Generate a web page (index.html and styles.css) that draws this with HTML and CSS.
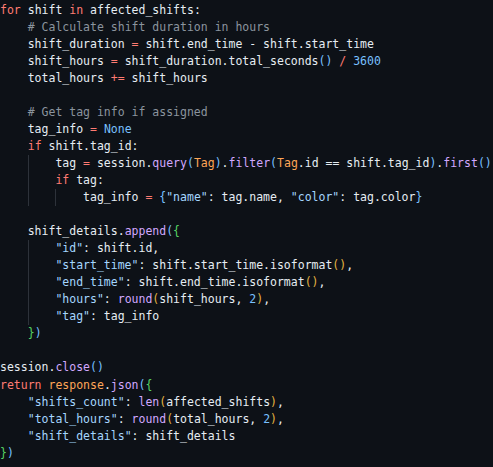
FILE: index.html
```html
<!DOCTYPE html>
<html>
<head>
<meta charset="utf-8">
<link rel="stylesheet" href="styles.css">
</head>
<body>
<div class="editor">
<div class="ln"><span class="k">for</span> shift <span class="k">in</span> affected_shifts:</div>
<div class="ln">    <span class="c"># Calculate shift duration in hours</span></div>
<div class="ln">    shift_duration <span class="o">=</span> shift.end_time - shift.start_time</div>
<div class="ln">    shift_hours <span class="o">=</span> shift_duration.total_seconds<span class="b1">()</span> <span class="o">/</span> <span class="n">3600</span></div>
<div class="ln">    total_hours <span class="o">+=</span> shift_hours</div>
<div class="ln"> </div>
<div class="ln">    <span class="c"># Get tag info if assigned</span></div>
<div class="ln">    tag_info <span class="o">=</span> <span class="n">None</span></div>
<div class="ln">    <span class="k">if</span> shift.tag_id:</div>
<div class="ln"><span class="ind"></span><span class="ind g"></span>tag <span class="o">=</span> session.<span class="f">query</span><span class="b1">(</span><span class="t">Tag</span><span class="b1">)</span>.<span class="f">filter</span><span class="b1">(</span><span class="t">Tag</span>.id == shift.tag_id<span class="b1">)</span>.<span class="f">first</span><span class="b1">()</span></div>
<div class="ln"><span class="ind"></span><span class="ind g"></span><span class="k">if</span> tag:</div>
<div class="ln"><span class="ind"></span><span class="ind g"></span><span class="ind g"></span>tag_info <span class="o">=</span> <span class="b1">{</span><span class="s">"name"</span>: tag.name, <span class="s">"color"</span>: tag.color<span class="b1">}</span></div>
<div class="ln"> </div>
<div class="ln">    shift_details.<span class="f">append</span><span class="b1">(</span><span class="b2">{</span></div>
<div class="ln"><span class="ind"></span><span class="ind g"></span><span class="s">"id"</span>: shift.id,</div>
<div class="ln"><span class="ind"></span><span class="ind g"></span><span class="s">"start_time"</span>: shift.start_time.isoformat<span class="b3">()</span>,</div>
<div class="ln"><span class="ind"></span><span class="ind g"></span><span class="s">"end_time"</span>: shift.end_time.isoformat<span class="b3">()</span>,</div>
<div class="ln"><span class="ind"></span><span class="ind g"></span><span class="s">"hours"</span>: <span class="f">round</span><span class="b3">(</span>shift_hours, <span class="n">2</span><span class="b3">)</span>,</div>
<div class="ln"><span class="ind"></span><span class="ind g"></span><span class="s">"tag"</span>: tag_info</div>
<div class="ln">    <span class="b2">}</span><span class="b1">)</span></div>
<div class="ln"> </div>
<div class="ln">session.<span class="f">close</span><span class="b1">()</span></div>
<div class="ln"><span class="k">return</span> <span class="t">response</span>.<span class="f">json</span><span class="b1">(</span><span class="b2">{</span></div>
<div class="ln">    <span class="s">"shifts_count"</span>: <span class="f">len</span><span class="b3">(</span>affected_shifts<span class="b3">)</span>,</div>
<div class="ln">    <span class="s">"total_hours"</span>: <span class="f">round</span><span class="b3">(</span>total_hours, <span class="n">2</span><span class="b3">)</span>,</div>
<div class="ln">    <span class="s">"shift_details"</span>: shift_details</div>
<div class="ln"><span class="b2">}</span><span class="b1">)</span></div>
</div>
</body>
</html>
```

FILE: styles.css
```css
html, body {
  margin: 0;
  padding: 0;
  background: #0d1117;
}

.editor {
  width: 493px;
  height: 467px;
  overflow: hidden;
  box-sizing: border-box;
  padding-top: 1.5px;
  background: #0d1117;
  color: #e6edf3;
  font-family: "DejaVu Sans Mono", "Liberation Mono", monospace;
  font-size: 11.5px;
}

.ln {
  height: 17.06px;
  line-height: 17.06px;
  white-space: pre;
}

.ind {
  display: inline-block;
  width: 4ch;
  height: 17.06px;
  vertical-align: top;
  box-sizing: border-box;
}

.ind.g {
  border-left: 1px solid #2d323a;
}

.k { color: #ff7b72; }
.o { color: #ff7b72; }
.c { color: #8b949e; }
.n { color: #79c0ff; }
.s { color: #a5d6ff; }
.f { color: #d2a8ff; }
.t { color: #ffa657; }
.b1 { color: #79c0ff; }
.b2 { color: #56d364; }
.b3 { color: #e3b341; }
```
